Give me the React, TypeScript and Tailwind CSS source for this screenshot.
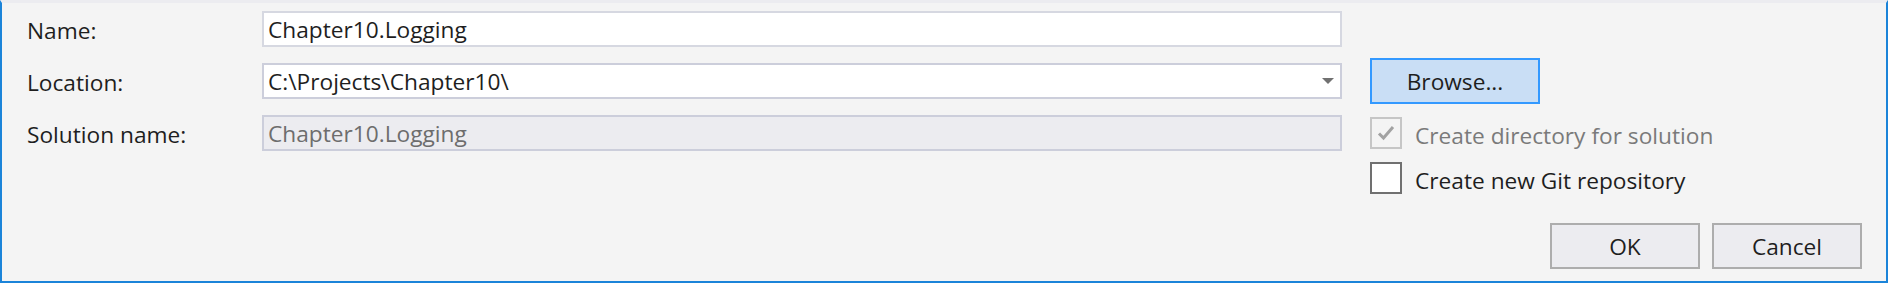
import React from 'react';

// "New project" dialog footer: location fields, options and OK/Cancel
const font = { fontFamily: '"Open Sans", "Noto Sans", sans-serif' };

const Label = ({ children }: { children: React.ReactNode }) => (
  <div className="w-[235px] shrink-0 pt-[4px] text-[#1e1e1e]">{children}</div>
);

const Checkbox = ({ checked, disabled, label }: { checked?: boolean; disabled?: boolean; label: string }) => (
  <div className="flex items-center h-[32px]">
    <div
      className={`w-[32px] h-[32px] border-2 flex items-center justify-center ${
        disabled ? 'border-[#c6c6c6] bg-[#f4f4f4]' : 'border-[#707070] bg-white'
      }`}
    >
      {checked && (
        <svg width="18" height="16" viewBox="0 0 18 16">
          <path d="M2 8.5 L6.5 13 L16 2" fill="none" stroke="#a2a2a2" strokeWidth="3" />
        </svg>
      )}
    </div>
    <span className={`ml-[13px] pt-[6px] ${disabled ? 'text-[#7a7a7a]' : 'text-[#1e1e1e]'}`}>{label}</span>
  </div>
);

export default function App() {
  return (
    <div
      className="w-[1888px] h-[283px] bg-[#f4f4f4] border-t-[3px] border-t-[#ececf0] border-l-2 border-r-2 border-b-2 border-l-[#1b84d9] border-r-[#1b84d9] border-b-[#1b84d9] text-[22.7px] leading-none overflow-hidden"
      style={font}
    >
      <div className="flex flex-col pt-[8px] pl-[25px] pr-[24px]">
        <div className="flex items-center h-[36px]">
          <Label>Name:</Label>
          <div className="w-[1080px] h-[36px] border-2 border-[#d6d8e1] bg-white flex items-center pl-[4px] pt-[3px] text-[#1e1e1e]">
            Chapter10.Logging
          </div>
        </div>

        <div className="flex items-center h-[36px] mt-[16px]">
          <Label>Location:</Label>
          <div className="w-[1080px] h-[36px] border-2 border-[#cccedb] bg-white flex items-center justify-between pl-[4px] pr-[6px] text-[#1e1e1e]">
            <span className="pt-[3px]">C:\Projects\Chapter10\</span>
            <svg width="12" height="6" viewBox="0 0 12 6">
              <path d="M0 0 H12 L6 6 Z" fill="#717171" />
            </svg>
          </div>
          <button className="ml-[28px] w-[170px] h-[46px] -my-[5px] pt-[3px] border-2 border-[#3399ff] bg-[#c9def5] text-[#1e1e1e] flex items-center justify-center">
            Browse...
          </button>
        </div>

        <div className="flex items-center h-[36px] mt-[16px]">
          <Label>Solution name:</Label>
          <div className="w-[1080px] h-[36px] border-2 border-[#cccedb] bg-[#ececf0] flex items-center pl-[4px] pt-[3px] text-[#6d6d6d]">
            Chapter10.Logging
          </div>
          <div className="ml-[28px]">
            <Checkbox checked disabled label="Create directory for solution" />
          </div>
        </div>

        <div className="flex mt-[11px] pl-[1343px]">
          <Checkbox label="Create new Git repository" />
        </div>

        <div className="flex justify-end gap-[12px] mt-[29px]">
          <button className="w-[150px] h-[46px] pt-[3px] border-2 border-[#adadad] bg-[#ececf0] text-[#1e1e1e]">OK</button>
          <button className="w-[150px] h-[46px] pt-[3px] border-2 border-[#adadad] bg-[#ececf0] text-[#1e1e1e]">Cancel</button>
        </div>
      </div>
    </div>
  );
}
